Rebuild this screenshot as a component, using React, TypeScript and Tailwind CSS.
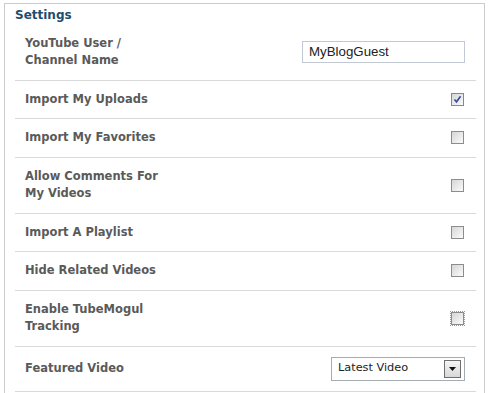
import React from 'react';

type Row =
  | { label: React.ReactNode; kind: 'text'; value: string }
  | { label: React.ReactNode; kind: 'check'; checked?: boolean; focused?: boolean }
  | { label: React.ReactNode; kind: 'select'; value: string };

const rows: Row[] = [
  { label: <>YouTube User /<br />Channel Name</>, kind: 'text', value: 'MyBlogGuest' },
  { label: 'Import My Uploads', kind: 'check', checked: true },
  { label: 'Import My Favorites', kind: 'check' },
  { label: <>Allow Comments For<br />My Videos</>, kind: 'check' },
  { label: 'Import A Playlist', kind: 'check' },
  { label: 'Hide Related Videos', kind: 'check' },
  { label: <>Enable TubeMogul<br />Tracking</>, kind: 'check', focused: true },
  { label: 'Featured Video', kind: 'select', value: 'Latest Video' },
];

function Checkbox({ checked, focused }: { checked?: boolean; focused?: boolean }) {
  return (
    <span
      className={`relative block w-[13px] h-[13px] border ${
        checked ? 'border-[#7f8a99]' : 'border-[#8c8c8c]'
      } bg-gradient-to-br from-[#d6d6d6] to-[#fbfbfb] ${
        focused ? 'outline outline-1 outline-dotted outline-[#9a9a9a]' : ''
      }`}
    >
      {checked && (
        <svg className="absolute left-[1px] top-[1px]" width="9" height="9" viewBox="0 0 9 9">
          <path d="M1.5 4.5 L3.5 6.8 L7.6 1.2" fill="none" stroke="#3a4f9c" strokeWidth="1.7" />
        </svg>
      )}
    </span>
  );
}

export default function App() {
  return (
    <div className="w-[489px] h-[393px] overflow-hidden bg-white">
      <div className="ml-[4px] mt-[3px] w-[481px] h-[420px] border border-[#cccccc]">
        {/* Header */}
        <div className="pl-[10px] pt-[3px] leading-[17.5px] text-[12px] font-bold text-[#1f4d6c] font-['DejaVu_Sans',sans-serif]">
          Settings
        </div>

        {/* Rows */}
        <div className="ml-[10px] mr-[8px]">
          {rows.map((row, i) => (
            <div
              key={i}
              className="flex items-center justify-between border-b border-[#d9d9d9] py-[10px] pl-[10px] pr-[11px]"
            >
              <div className="w-[165px] leading-[17.5px] text-[11.5px] font-bold text-[#5a5a5a] font-['DejaVu_Sans',sans-serif]">
                {row.label}
              </div>
              {row.kind === 'text' && (
                <div className="w-[163px] h-[22px] border border-[#c2c8d4] flex items-center pl-[6px] text-[13.3px] text-[#222] font-['Liberation_Sans',Arial,sans-serif]">
                  {row.value}
                </div>
              )}
              {row.kind === 'check' && (
                <div className="pr-[1px]">
                  <Checkbox checked={row.checked} focused={row.focused} />
                </div>
              )}
              {row.kind === 'select' && (
                <div className="w-[134px] h-[24px] border border-[#a5acb2] flex items-center justify-between pl-[6px] pr-[3px] text-[11.3px] text-[#222] font-['DejaVu_Sans',sans-serif]">
                  <span>{row.value}</span>
                  <span className="w-[17px] h-[18px] border border-[#6f6f6f] bg-gradient-to-b from-[#f4f4f4] to-[#d8d8d8] flex items-center justify-center">
                    <svg width="7" height="4" viewBox="0 0 7 4">
                      <path d="M0 0 H7 L3.5 4 Z" fill="#111" />
                    </svg>
                  </span>
                </div>
              )}
            </div>
          ))}
        </div>
      </div>
    </div>
  );
}
